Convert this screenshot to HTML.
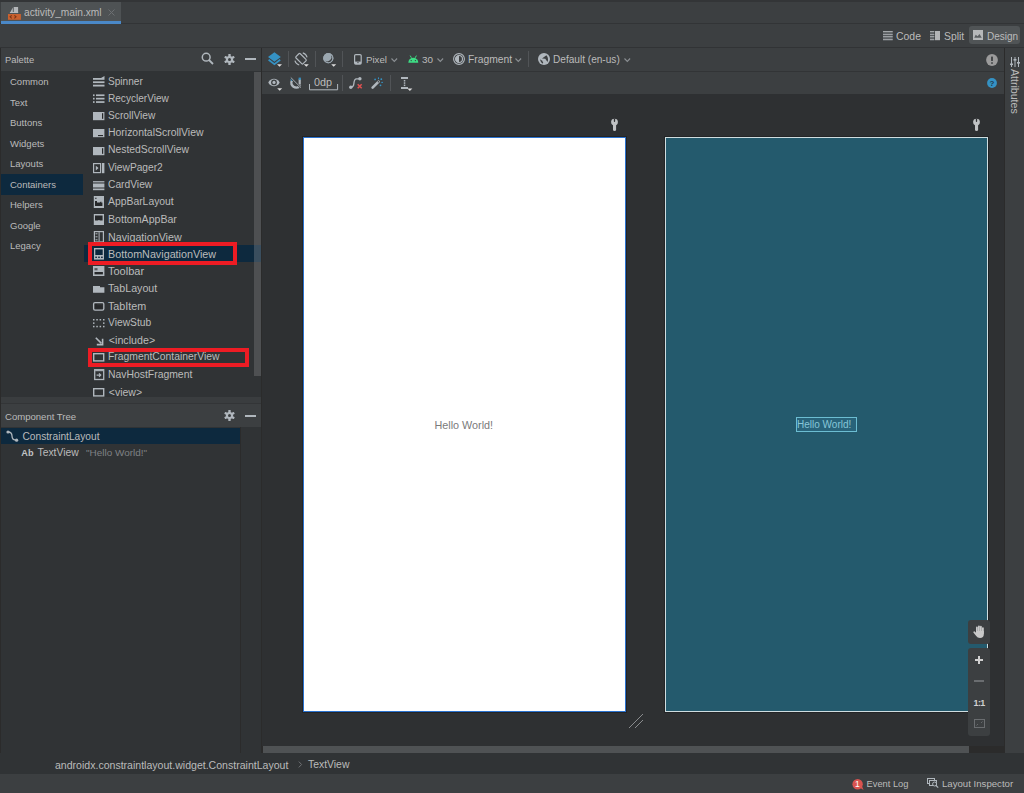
<!DOCTYPE html>
<html><head><meta charset="utf-8">
<style>
*{margin:0;padding:0;box-sizing:border-box}
html,body{width:1024px;height:793px;overflow:hidden;background:#2b2b2b;font-family:"Liberation Sans",sans-serif;color:#bbbbbb}
.a{position:absolute}
.t{position:absolute;white-space:nowrap;font-size:10.5px;line-height:12px}
svg{position:absolute;overflow:visible}
</style></head><body>
<div class="a" style="left:0px;top:0px;width:1024px;height:2px;background:#333537;"></div>
<div class="a" style="left:0px;top:2px;width:1024px;height:21px;background:#3c3f41;"></div>
<div class="a" style="left:0px;top:23px;width:1024px;height:1px;background:#323436;"></div>
<div class="a" style="left:1px;top:2px;width:120px;height:19px;background:#4e5254;"></div>
<div class="a" style="left:1px;top:21px;width:120px;height:3px;background:#4a88c7;"></div>
<svg style="left:8px;top:7px" width="13" height="13" viewBox="0 0 13 13"><path d="M1.9 6L4.8 0.6V6Z" fill="#b4b7ba"/><rect x="5.7" y="0" width="4.4" height="6" fill="#b4b7ba"/><rect x="1.9" y="5" width="8.2" height="1" fill="#b4b7ba"/><rect x="0" y="7" width="12.9" height="5.8" fill="#c9612f"/><path d="M3.7 8.3L2.1 9.8L3.7 11.3M6.4 8.3L8 9.8L6.4 11.3" stroke="#7a3516" stroke-width="1.1" fill="none"/></svg>
<div class="t" style="left:24px;top:6.97px;font-size:10.2px;color:#bbbbbb;">activity_main.xml</div>
<svg style="left:107.6px;top:9px" width="7" height="7" viewBox="0 0 7 7"><path d="M0.5 0.5L6.5 6.5M6.5 0.5L0.5 6.5" stroke="#6c6f72" stroke-width="1"/></svg>
<div class="a" style="left:0px;top:24px;width:1024px;height:23px;background:#3c3f41;"></div>
<div class="a" style="left:0px;top:47px;width:1024px;height:1px;background:#313335;"></div>
<svg style="left:883px;top:31px" width="10" height="10" viewBox="0 0 10 10"><rect x="0" y="0.2" width="9.7" height="4" fill="#5d6164"/><rect x="0" y="5.2" width="9.7" height="4" fill="#5d6164"/><rect x="0" y="0" width="9.7" height="1.1" fill="#a2a6a9"/><rect x="0" y="3.1" width="9.7" height="1.1" fill="#a2a6a9"/><rect x="0" y="5.1" width="9.7" height="1.1" fill="#a2a6a9"/><rect x="0" y="8.1" width="9.7" height="1.1" fill="#a2a6a9"/></svg>
<div class="t" style="left:896px;top:30.78px;font-size:10.45px;color:#bbbbbb;">Code</div>
<svg style="left:930px;top:31px" width="10" height="10" viewBox="0 0 10 10"><rect x="0" y="0.2" width="4.3" height="4" fill="#5d6164"/><rect x="0" y="5.2" width="4.3" height="4" fill="#5d6164"/><rect x="0" y="0" width="4.3" height="1.1" fill="#a2a6a9"/><rect x="0" y="3.1" width="4.3" height="1.1" fill="#a2a6a9"/><rect x="0" y="5.1" width="4.3" height="1.1" fill="#a2a6a9"/><rect x="0" y="8.1" width="4.3" height="1.1" fill="#a2a6a9"/><rect x="5" y="0" width="5" height="9.2" fill="#b2b4b6"/></svg>
<div class="t" style="left:944px;top:30.80px;font-size:10.4px;color:#bbbbbb;">Split</div>
<div class="a" style="left:969px;top:26px;width:51px;height:18px;background:#505456;border-radius:3px"></div>
<svg style="left:973px;top:30px" width="10" height="10" viewBox="0 0 10 10"><rect width="10" height="10" fill="#b6b8ba"/><path d="M1.2 7.7L2.7 4.8L4.6 6.3L6.5 3.9L8.8 7.7Z" fill="#5b5f62"/></svg>
<div class="t" style="left:987px;top:30.93px;font-size:10px;color:#bbbbbb;">Design</div>
<div class="a" style="left:0px;top:48px;width:1px;height:705px;background:#2b2b2b;"></div>
<div class="a" style="left:1px;top:48px;width:260px;height:23px;background:#3c3f41;"></div>
<div class="t" style="left:5px;top:53.84px;font-size:9.4px;color:#bbbbbb;">Palette</div>
<svg style="left:201px;top:52px" width="13" height="13" viewBox="0 0 13 13"><circle cx="5.2" cy="5.2" r="3.9" stroke="#b0b7bd" stroke-width="1.5" fill="none"/><path d="M8 8L12 12" stroke="#b0b7bd" stroke-width="1.8"/></svg>
<svg style="left:224px;top:54px" width="11" height="11" viewBox="0 0 11 11"><g fill="#b0b7bd"><circle cx="5.5" cy="5.5" r="3.6"/><rect x="4.3" y="0" width="2.4" height="11" rx="0.6" transform="rotate(0 5.5 5.5)"/><rect x="4.3" y="0" width="2.4" height="11" rx="0.6" transform="rotate(60 5.5 5.5)"/><rect x="4.3" y="0" width="2.4" height="11" rx="0.6" transform="rotate(120 5.5 5.5)"/></g><circle cx="5.5" cy="5.5" r="1.5" fill="#3c3f41"/></svg>
<div class="a" style="left:245px;top:58px;width:11px;height:2px;background:#b0b7bd;"></div>
<div class="a" style="left:1px;top:71px;width:260px;height:327px;background:#303335;"></div>
<div class="a" style="left:1px;top:174px;width:82px;height:21px;background:#0d293e;"></div>
<div class="t" style="left:10px;top:76.41px;font-size:9.5px;color:#bbbbbb;">Common</div>
<div class="t" style="left:10px;top:96.91px;font-size:9.5px;color:#bbbbbb;">Text</div>
<div class="t" style="left:10px;top:117.41px;font-size:9.5px;color:#bbbbbb;">Buttons</div>
<div class="t" style="left:10px;top:137.91px;font-size:9.5px;color:#bbbbbb;">Widgets</div>
<div class="t" style="left:10px;top:158.41px;font-size:9.5px;color:#bbbbbb;">Layouts</div>
<div class="t" style="left:10px;top:178.91px;font-size:9.5px;color:#bbbbbb;">Containers</div>
<div class="t" style="left:10px;top:199.41px;font-size:9.5px;color:#bbbbbb;">Helpers</div>
<div class="t" style="left:10px;top:219.91px;font-size:9.5px;color:#bbbbbb;">Google</div>
<div class="t" style="left:10px;top:240.41px;font-size:9.5px;color:#bbbbbb;">Legacy</div>
<div class="a" style="left:84px;top:245px;width:177px;height:17px;background:#0d293e;"></div>
<div class="a" style="left:254px;top:72px;width:7px;height:304px;background:#4e5052;"></div>
<div class="a" style="left:254px;top:245px;width:7px;height:17px;background:#3a4e5e;"></div>
<svg style="left:93px;top:76px" width="12" height="12" viewBox="0 0 12 12"><rect x="0" y="2" width="11.5" height="1.8" fill="#b0b7bd"/><path d="M8 2L11.5 0V2Z" fill="#b0b7bd"/><rect x="0" y="5.3" width="11.5" height="1.8" fill="#b0b7bd"/><rect x="0" y="8.7" width="11.5" height="1.8" fill="#b0b7bd"/></svg>
<div class="t" style="left:108px;top:75.50px;font-size:10.1px;color:#bbbbbb;">Spinner</div>
<svg style="left:93px;top:92px" width="12" height="12" viewBox="0 0 12 12"><rect x="0" y="2.4" width="1.6" height="1.7" fill="#b0b7bd"/><rect x="3" y="2.4" width="8.5" height="1.7" fill="#b0b7bd"/><rect x="0" y="5.8" width="1.6" height="1.7" fill="#b0b7bd"/><rect x="3" y="5.8" width="8.5" height="1.7" fill="#b0b7bd"/><rect x="0" y="9.2" width="1.6" height="1.7" fill="#b0b7bd"/><rect x="3" y="9.2" width="8.5" height="1.7" fill="#b0b7bd"/></svg>
<div class="t" style="left:108px;top:92.76px;font-size:10.07px;color:#bbbbbb;">RecyclerView</div>
<svg style="left:93px;top:110px" width="12" height="12" viewBox="0 0 12 12"><rect x="0" y="2" width="11.4" height="8.2" fill="#b0b7bd"/><rect x="9" y="3.2" width="1.2" height="5.6" fill="#26282a"/></svg>
<div class="t" style="left:108px;top:109.97px;font-size:10.2px;color:#bbbbbb;">ScrollView</div>
<svg style="left:93px;top:127px" width="12" height="12" viewBox="0 0 12 12"><rect x="0" y="2" width="11.4" height="8.2" fill="#b0b7bd"/><rect x="5" y="8" width="5" height="1.1" fill="#26282a"/></svg>
<div class="t" style="left:108px;top:127.13px;font-size:10.45px;color:#bbbbbb;">HorizontalScrollView</div>
<svg style="left:93px;top:145px" width="12" height="12" viewBox="0 0 12 12"><rect x="0" y="2" width="11.4" height="8.2" fill="#b0b7bd"/><rect x="9" y="3.2" width="1.2" height="5.6" fill="#26282a"/></svg>
<div class="t" style="left:108px;top:144.41px;font-size:10.37px;color:#bbbbbb;">NestedScrollView</div>
<svg style="left:93px;top:162px" width="12" height="12" viewBox="0 0 12 12"><rect x="0.6" y="1.6" width="7" height="9" fill="none" stroke="#b0b7bd" stroke-width="1.2"/><path d="M2.8 3.8L5.6 6.1L2.8 8.4Z" fill="#b0b7bd"/><rect x="9" y="1" width="2.4" height="10.2" fill="#b0b7bd"/></svg>
<div class="t" style="left:108px;top:161.72px;font-size:10.2px;color:#bbbbbb;">ViewPager2</div>
<svg style="left:93px;top:179px" width="12" height="12" viewBox="0 0 12 12"><rect x="0" y="2" width="11.4" height="1.5" fill="#b0b7bd" opacity="0.85"/><rect x="0" y="4.5" width="11.4" height="4" fill="#b0b7bd"/><rect x="0" y="9.5" width="11.4" height="1.7" fill="#b0b7bd"/></svg>
<div class="t" style="left:108px;top:178.94px;font-size:10.26px;color:#bbbbbb;">CardView</div>
<svg style="left:93px;top:196px" width="12" height="12" viewBox="0 0 12 12"><rect x="0.8" y="0" width="10.2" height="12" fill="#b0b7bd"/><rect x="2" y="1.8" width="1.6" height="0.9" fill="#26282a"/><path d="M2 5H4V6.6H6.8L8.2 5.3L8.2 6.6H9.4V10H2Z" fill="#26282a"/></svg>
<div class="t" style="left:108px;top:196.15px;font-size:10.38px;color:#bbbbbb;">AppBarLayout</div>
<svg style="left:93px;top:214px" width="12" height="12" viewBox="0 0 12 12"><rect x="0.8" y="0" width="10.2" height="11" fill="#b0b7bd"/><path d="M2 1.6H9.6V6.6H7.2Q6 5.4 4.6 6.6H2Z" fill="#26282a"/></svg>
<div class="t" style="left:108px;top:213.33px;font-size:10.6px;color:#bbbbbb;">BottomAppBar</div>
<svg style="left:93px;top:231px" width="12" height="12" viewBox="0 0 12 12"><rect x="1.4" y="0.6" width="9" height="10.4" fill="none" stroke="#b0b7bd" stroke-width="1.2"/><rect x="2.5" y="2.3" width="2" height="1" fill="#b0b7bd"/><rect x="2.5" y="5.3" width="2" height="1" fill="#b0b7bd"/><rect x="2.5" y="8.3" width="2" height="1" fill="#b0b7bd"/><rect x="5.6" y="1.2" width="1" height="9.2" fill="#b0b7bd"/></svg>
<div class="t" style="left:108px;top:230.53px;font-size:10.73px;color:#bbbbbb;">NavigationView</div>
<svg style="left:93px;top:248px" width="12" height="12" viewBox="0 0 12 12"><rect x="1" y="0" width="10" height="11.6" fill="#b0b7bd"/><rect x="2.3" y="1.4" width="7.4" height="5.6" fill="#0d293e"/><rect x="2.3" y="8.6" width="1.6" height="1.4" fill="#0d293e"/><rect x="5.2" y="8.6" width="1.6" height="1.4" fill="#0d293e"/><rect x="8.1" y="8.6" width="1.6" height="1.4" fill="#0d293e"/></svg>
<div class="t" style="left:108px;top:247.76px;font-size:10.78px;color:#bbbbbb;">BottomNavigationView</div>
<svg style="left:93px;top:266px" width="12" height="12" viewBox="0 0 12 12"><rect x="0" y="0" width="11.4" height="10" fill="#b0b7bd"/><rect x="1.5" y="2.1" width="3" height="2.2" fill="#55595d"/><rect x="1.5" y="6" width="8.4" height="2.4" fill="#26282a"/></svg>
<div class="t" style="left:108px;top:264.94px;font-size:11.0px;color:#bbbbbb;">Toolbar</div>
<svg style="left:93px;top:285px" width="12" height="12" viewBox="0 0 12 12"><path d="M0 1H7V2.2H11.4V7.7H0Z" fill="#b0b7bd"/></svg>
<div class="t" style="left:108px;top:282.30px;font-size:10.68px;color:#bbbbbb;">TabLayout</div>
<svg style="left:93px;top:301.5px" width="12" height="12" viewBox="0 0 12 12"><rect x="0.6" y="0.6" width="10.2" height="7.6" rx="1.4" fill="none" stroke="#b0b7bd" stroke-width="1.3"/><path d="M2 2H4V3.2H9.4V6.8H2Z" fill="#26282a"/></svg>
<div class="t" style="left:108px;top:299.52px;font-size:10.76px;color:#bbbbbb;">TabItem</div>
<svg style="left:93px;top:318.7px" width="12" height="12" viewBox="0 0 12 12"><rect x="0" y="0" width="1.5" height="1.5" fill="#b0b7bd"/><rect x="3.3" y="0" width="1.5" height="1.5" fill="#b0b7bd"/><rect x="6.6" y="0" width="1.5" height="1.5" fill="#b0b7bd"/><rect x="10" y="0" width="1.5" height="1.5" fill="#b0b7bd"/><rect x="0" y="3.4" width="1.5" height="1.5" fill="#b0b7bd"/><rect x="10" y="3.4" width="1.5" height="1.5" fill="#b0b7bd"/><rect x="0" y="6.8" width="1.5" height="1.5" fill="#b0b7bd"/><rect x="3.3" y="6.8" width="1.5" height="1.5" fill="#b0b7bd"/><rect x="6.6" y="6.8" width="1.5" height="1.5" fill="#b0b7bd"/><rect x="10" y="6.8" width="1.5" height="1.5" fill="#b0b7bd"/></svg>
<div class="t" style="left:108px;top:316.94px;font-size:10.27px;color:#bbbbbb;">ViewStub</div>
<svg style="left:95.4px;top:336.6px" width="12" height="12" viewBox="0 0 12 12"><path d="M0.8 0.8L6.4 6.4" stroke="#b0b7bd" stroke-width="1.6"/><path d="M1.8 7.6H7.6V1.8" stroke="#b0b7bd" stroke-width="1.6" fill="none"/></svg>
<div class="t" style="left:108.8px;top:334.04px;font-size:10.7px;color:#bbbbbb;">&lt;include&gt;</div>
<svg style="left:93px;top:353.2px" width="12" height="12" viewBox="0 0 12 12"><rect x="0.7" y="0.7" width="10" height="7.2" fill="none" stroke="#b0b7bd" stroke-width="1.4"/></svg>
<div class="t" style="left:108px;top:351.41px;font-size:10.37px;color:#bbbbbb;">FragmentContainerView</div>
<svg style="left:93.6px;top:369.2px" width="12" height="12" viewBox="0 0 12 12"><rect x="0.7" y="0.7" width="9" height="9.8" fill="none" stroke="#b0b7bd" stroke-width="1.3"/><rect x="1.2" y="1.1" width="8" height="1.1" fill="#b0b7bd"/><path d="M2.6 6.1H6.2M5 4.4L6.8 6.1L5 7.8" stroke="#b0b7bd" stroke-width="1.1" fill="none"/></svg>
<div class="t" style="left:108px;top:368.65px;font-size:10.4px;color:#bbbbbb;">NavHostFragment</div>
<svg style="left:93px;top:388px" width="12" height="12" viewBox="0 0 12 12"><rect x="0.7" y="0.7" width="10" height="7.2" fill="none" stroke="#b0b7bd" stroke-width="1.4"/></svg>
<div class="t" style="left:108.8px;top:385.86px;font-size:10.5px;color:#bbbbbb;">&lt;view&gt;</div>
<div class="a" style="left:88px;top:242px;width:149px;height:23px;background:transparent;border:4px solid #ed1c24"></div>
<div class="a" style="left:88px;top:348px;width:161px;height:19px;background:transparent;border:4px solid #ed1c24"></div>
<div class="a" style="left:1px;top:397px;width:260px;height:6px;background:#3a3d3f;"></div>
<div class="a" style="left:1px;top:403px;width:260px;height:1px;background:#333537;"></div>
<div class="a" style="left:1px;top:404px;width:260px;height:23px;background:#3c3f41;"></div>
<div class="t" style="left:5px;top:410.99px;font-size:9.55px;color:#bbbbbb;">Component Tree</div>
<svg style="left:224px;top:410px" width="11" height="11" viewBox="0 0 11 11"><g fill="#b0b7bd"><circle cx="5.5" cy="5.5" r="3.6"/><rect x="4.3" y="0" width="2.4" height="11" rx="0.6" transform="rotate(0 5.5 5.5)"/><rect x="4.3" y="0" width="2.4" height="11" rx="0.6" transform="rotate(60 5.5 5.5)"/><rect x="4.3" y="0" width="2.4" height="11" rx="0.6" transform="rotate(120 5.5 5.5)"/></g><circle cx="5.5" cy="5.5" r="1.5" fill="#3c3f41"/></svg>
<div class="a" style="left:245px;top:415px;width:11px;height:2px;background:#b0b7bd;"></div>
<div class="a" style="left:1px;top:427px;width:260px;height:326px;background:#303335;"></div>
<div class="a" style="left:240px;top:427px;width:1px;height:326px;background:#2b2b2b;"></div>
<div class="a" style="left:1px;top:428px;width:239px;height:16px;background:#0d293e;"></div>
<svg style="left:6px;top:430px" width="13" height="13" viewBox="0 0 13 13"><circle cx="2" cy="2" r="1.6" fill="#b0b7bd"/><circle cx="10.6" cy="10.2" r="1.6" fill="#b0b7bd"/><path d="M2 2Q6 2 6 6Q6 10.2 10.6 10.2" stroke="#b0b7bd" stroke-width="1.3" fill="none"/></svg>
<div class="t" style="left:22.5px;top:430.77px;font-size:10.2px;color:#bbbbbb;">ConstraintLayout</div>
<div class="t" style="left:21.3px;top:446.61px;font-size:9.2px;color:#c0c3c5;font-weight:bold">Ab</div>
<div class="t" style="left:37.5px;top:446.71px;font-size:10.35px;color:#bbbbbb;">TextView</div>
<div class="t" style="left:86px;top:446.85px;font-size:9.95px;color:#7f8184;">"Hello World!"</div>
<div class="a" style="left:261px;top:48px;width:1px;height:705px;background:#2b2b2b;"></div>
<div class="a" style="left:262px;top:48px;width:742px;height:23px;background:#3c3f41;"></div>
<div class="a" style="left:262px;top:71px;width:742px;height:1px;background:#323436;"></div>
<div class="a" style="left:262px;top:72px;width:742px;height:22px;background:#3c3f41;"></div>
<div class="a" style="left:288px;top:51px;width:1px;height:16px;background:#515457;"></div>
<div class="a" style="left:315px;top:51px;width:1px;height:16px;background:#515457;"></div>
<div class="a" style="left:342px;top:51px;width:1px;height:16px;background:#515457;"></div>
<div class="a" style="left:528px;top:51px;width:1px;height:16px;background:#515457;"></div>
<div class="a" style="left:342px;top:75px;width:1px;height:16px;background:#515457;"></div>
<div class="a" style="left:390px;top:75px;width:1px;height:16px;background:#515457;"></div>
<svg style="left:268px;top:52px" width="15" height="15" viewBox="0 0 15 15"><path d="M6.4 0.3L12.8 5L6.4 9.7L0 5Z" fill="#3592c4"/><path d="M0.6 7.7L6.4 12.1L12.2 7.7" stroke="#3592c4" stroke-width="1.7" fill="none"/><path d="M9 12.2H14L11.5 14.799999999999999Z" fill="#dcdcdc"/></svg>
<svg style="left:294px;top:52px" width="15" height="15" viewBox="0 0 15 15"><rect x="4.2" y="1.8" width="6" height="10" rx="1" transform="rotate(-45 7 7)" fill="none" stroke="#b0b7bd" stroke-width="1.2"/><path d="M8.8 0.9A6.3 6.3 0 0 1 13.1 5.4M0.9 8.6A6.3 6.3 0 0 0 5.2 13" stroke="#b0b7bd" stroke-width="1.1" fill="none"/><path d="M9.8 12.2H14.8L12.3 14.799999999999999Z" fill="#dcdcdc"/></svg>
<svg style="left:323px;top:53px" width="14" height="14" viewBox="0 0 14 14"><circle cx="5.3" cy="5.2" r="5.1" fill="#9ba7b0"/><path d="M7.67 1.73A4.2 4.2 0 1 1 1.83 7.57A4.2 4.2 0 0 0 7.67 1.73Z" fill="#3c3f41"/><path d="M7.9 2.3A4.4 4.4 0 0 1 2.4 7.8" stroke="#9ba7b0" stroke-width="0.0" fill="none"/><circle cx="5.3" cy="5.2" r="4.6" stroke="#9ba7b0" stroke-width="1" fill="none"/><path d="M8.2 11.2H13.2L10.7 13.799999999999999Z" fill="#dcdcdc"/></svg>
<svg style="left:354px;top:54px" width="8" height="11" viewBox="0 0 8 11"><rect x="0.6" y="0.6" width="6.6" height="9.6" rx="1.2" fill="none" stroke="#b0b7bd" stroke-width="1.2"/><rect x="1" y="7.6" width="6" height="2.4" fill="#b0b7bd"/><rect x="3.3" y="8.2" width="1.3" height="0.9" fill="#3c3f41"/></svg>
<div class="t" style="left:366px;top:54.04px;font-size:9.7px;color:#bbbbbb;">Pixel</div>
<svg style="left:391px;top:58px" width="7" height="5" viewBox="0 0 7 5"><path d="M0.5 0.5L3.3 3.5L6.1 0.5" stroke="#8b8f93" stroke-width="1.1" fill="none"/></svg>
<svg style="left:408px;top:55px" width="11" height="8" viewBox="0 0 11 8"><path d="M0.3 7.8A5 5 0 0 1 10.3 7.8Z" fill="#3ddc84"/><path d="M2.2 0.6L3.4 2.8M8.4 0.6L7.2 2.8" stroke="#3ddc84" stroke-width="1"/><circle cx="3.2" cy="5.6" r="0.7" fill="#3c3f41"/><circle cx="7.4" cy="5.6" r="0.7" fill="#3c3f41"/></svg>
<div class="t" style="left:422px;top:53.67px;font-size:9.9px;color:#bbbbbb;">30</div>
<svg style="left:437px;top:58px" width="7" height="5" viewBox="0 0 7 5"><path d="M0.5 0.5L3.3 3.5L6.1 0.5" stroke="#8b8f93" stroke-width="1.1" fill="none"/></svg>
<svg style="left:453px;top:53px" width="13" height="13" viewBox="0 0 13 13"><circle cx="6" cy="6" r="5.4" stroke="#b0b7bd" stroke-width="1.1" fill="none"/><circle cx="6" cy="6" r="3.5" stroke="#b0b7bd" stroke-width="1.1" fill="none"/><path d="M6 2.5A3.5 3.5 0 0 0 6 9.5Z" fill="#b0b7bd"/></svg>
<div class="t" style="left:468px;top:53.83px;font-size:10.3px;color:#bbbbbb;">Fragment</div>
<svg style="left:515px;top:58px" width="7" height="5" viewBox="0 0 7 5"><path d="M0.5 0.5L3.3 3.5L6.1 0.5" stroke="#8b8f93" stroke-width="1.1" fill="none"/></svg>
<svg style="left:538px;top:53px" width="12" height="12" viewBox="0 0 12 12"><circle cx="6" cy="6" r="6" fill="#b0b7bd"/><path d="M4 5.5L8.4 2.3Q10.6 4.4 9.8 8.9Q8.3 7.8 7.3 5.7Z" fill="#3c3f41"/><path d="M1.9 6.3Q3.4 6.9 5.2 9.3L4.7 10.8Q2.5 9.2 1.9 6.3Z" fill="#3c3f41"/></svg>
<div class="t" style="left:553px;top:53.90px;font-size:10.1px;color:#bbbbbb;">Default (en-us)</div>
<svg style="left:624px;top:58px" width="7" height="5" viewBox="0 0 7 5"><path d="M0.5 0.5L3.3 3.5L6.1 0.5" stroke="#8b8f93" stroke-width="1.1" fill="none"/></svg>
<svg style="left:986px;top:54px" width="12" height="12" viewBox="0 0 12 12"><circle cx="6" cy="6" r="5.9" fill="#9b9b9b"/><rect x="5.1" y="2.5" width="1.8" height="4.6" rx="0.5" fill="#3c3f41"/><rect x="5.1" y="8.2" width="1.8" height="1.6" rx="0.4" fill="#3c3f41"/></svg>
<svg style="left:268px;top:78px" width="15" height="13" viewBox="0 0 15 13"><path d="M0.3 4.4C2.5 -0.6 9.5 -0.6 11.7 4.4C9.5 9.4 2.5 9.4 0.3 4.4Z" fill="#b0b7bd"/><circle cx="6" cy="4.4" r="2.9" fill="#3c3f41"/><circle cx="6" cy="4.4" r="1.6" fill="#b0b7bd"/><path d="M9.2 10.2H14.2L11.7 12.799999999999999Z" fill="#dcdcdc"/></svg>
<svg style="left:290px;top:77px" width="12" height="12" viewBox="0 0 12 12"><path d="M2 3.4Q0.8 5.2 1.6 7.6Q3 10.6 6.4 10.6Q9.4 10.6 10 8.2" stroke="#b0b7bd" stroke-width="2.4" fill="none"/><path d="M9.7 2.2V7.6" stroke="#b0b7bd" stroke-width="2.2"/><rect x="0.6" y="1.6" width="2.4" height="2" fill="#3592c4" transform="rotate(-30 1.8 2.6)"/><rect x="8.6" y="0.6" width="2.3" height="2.2" fill="#3592c4"/><path d="M0.4 0.4L11.4 11.4" stroke="#3c3f41" stroke-width="1.8"/><path d="M0.8 0.5L11 10.7" stroke="#b0b7bd" stroke-width="0.9"/></svg>
<div class="t" style="left:314px;top:76.46px;font-size:10.8px;color:#bbbbbb;">0dp</div>
<svg style="left:309px;top:84px" width="30" height="7" viewBox="0 0 30 7"><path d="M0.5 0V5.8H28.6V0" stroke="#b0b7bd" stroke-width="1" fill="none"/></svg>
<svg style="left:349px;top:77px" width="14" height="12" viewBox="0 0 14 12"><circle cx="1.8" cy="10.2" r="1.7" fill="#b0b7bd"/><circle cx="10.9" cy="1.8" r="1.7" fill="#b0b7bd"/><path d="M1.8 10.2Q4.6 10.2 4.9 6.4Q5.2 1.8 7.6 1.8H10.9" stroke="#b0b7bd" stroke-width="1.3" fill="none"/><path d="M8.7 7.3L12.7 11.3M12.7 7.3L8.7 11.3" stroke="#e05050" stroke-width="1.5"/></svg>
<svg style="left:371px;top:77px" width="13" height="13" viewBox="0 0 13 13"><path d="M1.6 10.6L7.6 4.6" stroke="#b0b7bd" stroke-width="2.6" stroke-linecap="round"/><circle cx="7.4" cy="4.8" r="0.8" fill="#3c3f41"/><g fill="#3592c4"><ellipse cx="7.5" cy="1.2" rx="0.6" ry="1"/><circle cx="4.1" cy="2.4" r="0.9"/><circle cx="10.3" cy="2.2" r="0.9"/><ellipse cx="11.1" cy="5.3" rx="1" ry="0.6"/><circle cx="9.5" cy="8.3" r="0.9"/></g></svg>
<svg style="left:401px;top:77px" width="12" height="14" viewBox="0 0 12 14"><rect x="0" y="0" width="7" height="2" fill="#b0b7bd"/><rect x="0" y="10" width="7" height="2" fill="#b0b7bd"/><rect x="2.8" y="3" width="1.5" height="1.5" fill="#b0b7bd"/><rect x="2.8" y="5.3" width="1.5" height="1.5" fill="#b0b7bd"/><rect x="2.8" y="7.6" width="1.5" height="1.5" fill="#b0b7bd"/><path d="M6.4 11.4H11.4L8.9 14.0Z" fill="#dcdcdc"/></svg>
<svg style="left:987px;top:78px" width="10" height="10" viewBox="0 0 10 10"><circle cx="5" cy="5" r="4.9" fill="#3592c4"/><text x="5" y="8.2" font-family="Liberation Sans" font-size="8" font-weight="bold" text-anchor="middle" fill="#1f3a4e">?</text></svg>
<div class="a" style="left:262px;top:94px;width:742px;height:652px;background:#2e3032;"></div>
<div class="a" style="left:263px;top:746px;width:706px;height:7px;background:#4f5254;"></div>
<svg style="left:611px;top:119px" width="7" height="13" viewBox="0 0 7 13"><circle cx="3.5" cy="3.1" r="3.4" fill="#c0c2c4"/><rect x="2" y="4" width="3.1" height="8" rx="1.5" fill="#c0c2c4"/><rect x="2.85" y="-0.6" width="1.3" height="3.5" rx="0.6" fill="#2e3032"/></svg>
<svg style="left:973px;top:119px" width="7" height="13" viewBox="0 0 7 13"><circle cx="3.5" cy="3.1" r="3.4" fill="#c0c2c4"/><rect x="2" y="4" width="3.1" height="8" rx="1.5" fill="#c0c2c4"/><rect x="2.85" y="-0.6" width="1.3" height="3.5" rx="0.6" fill="#2e3032"/></svg>
<div class="a" style="left:302px;top:136px;width:325px;height:577px;background:#232426;"></div>
<div class="a" style="left:303px;top:137px;width:323px;height:575px;background:#ffffff;border:1px solid #2a72cf"></div>
<div class="t" style="left:434.5px;top:418.76px;font-size:10.8px;color:#7a7a7a;">Hello World!</div>
<div class="a" style="left:664px;top:136px;width:325px;height:577px;background:#232426;"></div>
<div class="a" style="left:665px;top:137px;width:323px;height:575px;background:#245a6d;border:1px solid #cfdde0"></div>
<div class="a" style="left:796px;top:417px;width:61px;height:15px;background:#28637a;border:1px solid #6cbdd2"></div>
<div class="t" style="left:797px;top:418.84px;font-size:10px;color:#86c6d8;">Hello World!</div>
<svg style="left:628px;top:713px" width="16" height="16" viewBox="0 0 16 16"><path d="M1 15L15 1M7 15L15 7" stroke="#8a8c8e" stroke-width="1"/></svg>
<div class="a" style="left:968px;top:620px;width:22px;height:24px;background:#3c3f41;border-radius:3px"></div>
<div class="a" style="left:968px;top:648px;width:22px;height:88px;background:#3c3f41;border-radius:3px"></div>
<svg style="left:973px;top:625px" width="12" height="14" viewBox="0 0 12 14"><g fill="#c9c9c9"><rect x="3" y="1.6" width="1.8" height="7" rx="0.9"/><rect x="5" y="0.4" width="1.8" height="8" rx="0.9"/><rect x="7" y="0.8" width="1.8" height="8" rx="0.9"/><rect x="9" y="2.2" width="1.8" height="7" rx="0.9"/><path d="M3 6H10.8V9.2Q10.8 13 7 13Q4.4 13 3.2 11L0.4 7.6Q0 6.8 0.8 6.4Q1.5 6.1 2.1 6.8L3 7.8Z"/></g></svg>
<div class="a" style="left:974.5px;top:659px;width:8.5px;height:1.6px;background:#d0d0d0;"></div>
<div class="a" style="left:978px;top:655.6px;width:1.6px;height:8.6px;background:#d0d0d0;"></div>
<div class="a" style="left:974px;top:680px;width:10px;height:1.5px;background:#6a6d70;"></div>
<div class="t" style="left:973.5px;top:697.38px;font-size:9px;color:#d0d0d0;font-weight:bold;letter-spacing:-0.6px">1:1</div>
<svg style="left:974px;top:719px" width="11" height="9" viewBox="0 0 11 9"><rect x="0.5" y="0.5" width="10" height="8" fill="none" stroke="#6a6d70" stroke-width="1"/><path d="M2.5 6.5L4 5M8.5 2.5L7 4" stroke="#6a6d70" stroke-width="0.9"/></svg>
<div class="a" style="left:1004px;top:48px;width:1px;height:705px;background:#2b2b2b;"></div>
<div class="a" style="left:1005px;top:48px;width:19px;height:705px;background:#3c3f41;"></div>
<svg style="left:1010px;top:57px" width="10" height="11" viewBox="0 0 10 11"><g fill="#b0b7bd"><rect x="1" y="0" width="1" height="10"/><rect x="4.5" y="0" width="1" height="10"/><rect x="8" y="0" width="1" height="10"/><rect x="0" y="6.5" width="3" height="1.6"/><rect x="3.5" y="2" width="3" height="1.6"/><rect x="7" y="5" width="3" height="1.6"/></g></svg>
<div class="t" style="left:1009px;top:69px;font-size:10.6px;line-height:12px;transform-origin:0 0;transform:translate(12px,0) rotate(90deg)">Attributes</div>
<div class="a" style="left:0px;top:753px;width:1024px;height:21px;background:#303335;"></div>
<div class="t" style="left:55px;top:758.94px;font-size:10.55px;color:#bbbbbb;">androidx.constraintlayout.widget.ConstraintLayout</div>
<svg style="left:298px;top:761px" width="5" height="7" viewBox="0 0 5 7"><path d="M0.8 0.6L3.6 3.5L0.8 6.4" stroke="#6e7174" stroke-width="1" fill="none"/></svg>
<div class="t" style="left:308px;top:759.00px;font-size:10.4px;color:#bbbbbb;">TextView</div>
<div class="a" style="left:0px;top:774px;width:1024px;height:19px;background:#3c3f41;"></div>
<svg style="left:852px;top:779px" width="13" height="12" viewBox="0 0 13 12"><circle cx="5.6" cy="5.3" r="5.2" fill="#d9534f"/><path d="M8 8.8L11.6 11L10 7.2Z" fill="#d9534f"/><text x="5.4" y="8.3" font-family="Liberation Sans" font-size="8.5" text-anchor="middle" fill="#ffffff">1</text></svg>
<div class="t" style="left:866.6px;top:778.28px;font-size:9.3px;color:#bbbbbb;">Event Log</div>
<svg style="left:927px;top:778px" width="12" height="10" viewBox="0 0 12 10"><rect x="0.5" y="0.5" width="7" height="5" fill="none" stroke="#b0b7bd" stroke-width="1"/><rect x="2.5" y="2.5" width="7" height="5" fill="#3c3f41" stroke="#b0b7bd" stroke-width="1"/><circle cx="7.6" cy="6" r="2" fill="#3c3f41" stroke="#b0b7bd" stroke-width="1"/><path d="M9 7.5L11.2 9.6" stroke="#b0b7bd" stroke-width="1.2"/></svg>
<div class="t" style="left:942px;top:778.16px;font-size:9.65px;color:#bbbbbb;">Layout Inspector</div>
</body></html>
